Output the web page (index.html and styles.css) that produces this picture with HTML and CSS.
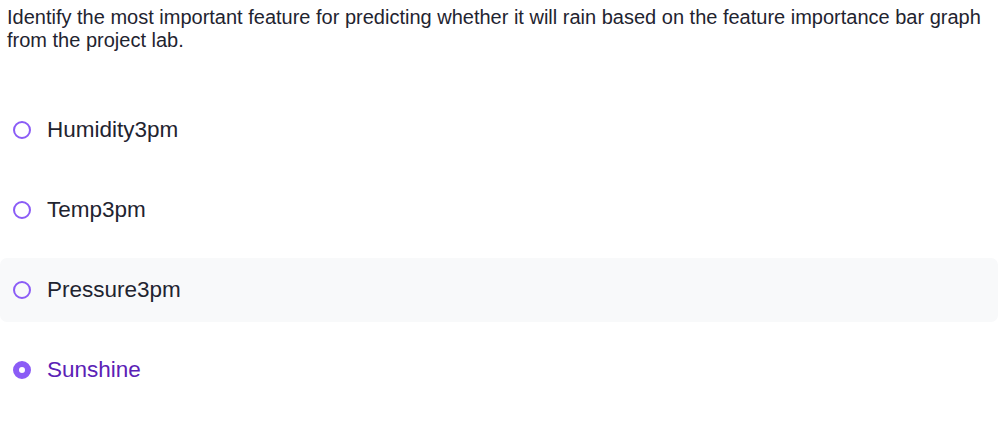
FILE: index.html
```html
<!DOCTYPE html>
<html>
<head>
<meta charset="utf-8">
<link rel="stylesheet" href="styles.css">
</head>
<body>
<div class="quiz">
  <p class="question">Identify the most important feature for predicting whether it will rain based on the feature importance bar graph from the project lab.</p>
  <div class="options">
    <label class="option"><span class="radio"></span><span class="label">Humidity3pm</span></label>
    <label class="option"><span class="radio"></span><span class="label">Temp3pm</span></label>
    <label class="option hover"><span class="radio"></span><span class="label">Pressure3pm</span></label>
    <label class="option checked"><span class="radio"></span><span class="label">Sunshine</span></label>
  </div>
</div>
</body>
</html>
```
FILE: styles.css
```css
html, body { margin: 0; padding: 0; background: #fff; }
body { font-family: "Liberation Sans", Arial, sans-serif; color: #1f2430; }
.quiz { width: 998px; }
.question { margin: 0; padding: 6px 7px 0 7px; font-size: 20px; line-height: 23px; color: #1f2430; }
.options { display: flex; flex-direction: column; gap: 16px; margin-top: 46px; }
.option { display: flex; align-items: center; height: 64px; padding-left: 13px; border-radius: 7px; cursor: pointer; }
.option.hover { background: #f8f9fa; }
.radio { width: 18px; height: 18px; box-sizing: border-box; border: 2px solid #8b5cf6; border-radius: 50%; flex: none; }
.option.checked .radio { border: 6px solid #8b5cf6; background: #fff; }
.label { margin-left: 16px; font-size: 22.5px; color: #1f2430; }
.option.checked .label { color: #5b21b6; }
```
